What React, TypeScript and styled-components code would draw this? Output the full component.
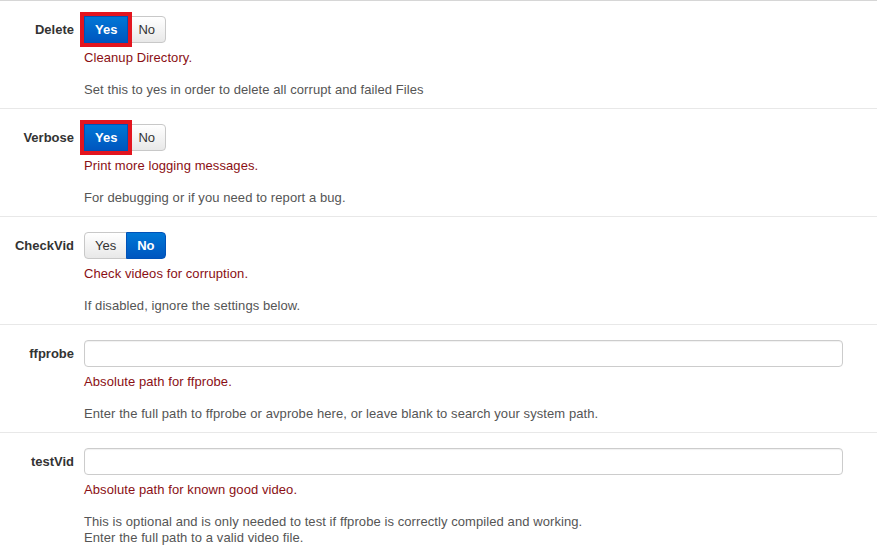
import React from "react";
import styled, { createGlobalStyle } from "styled-components";

const Global = createGlobalStyle`
  html, body { margin: 0; padding: 0; background: #fff; }
  body { font-family: "Liberation Sans", Arial, Helvetica, sans-serif; font-size: 13px; color: #333; letter-spacing: 0.08px; }
`;

const Page = styled.div`
  width: 877px;
  border-top: 1px solid #d6d6d6;
`;

const Row = styled.div<{ $first?: boolean }>`
  display: grid;
  grid-template-columns: 74px 759px;
  column-gap: 10px;
  padding: 15px 0 10px;
  border-top: ${(p) => (p.$first ? "none" : "1px solid #e8e8e8")};
`;

const Label = styled.label`
  font-weight: bold;
  text-align: right;
  line-height: 27px;
  height: 27px;
  white-space: nowrap;
  color: #333;
  letter-spacing: 0;
`;

const Controls = styled.div`
  display: flex;
  flex-direction: column;
`;

const Group = styled.div`
  display: flex;
  height: 27px;
`;

const Toggle = styled.button<{ $active?: boolean; $flag?: boolean; $pos: "left" | "right" }>`
  font-family: inherit;
  font-size: 13px;
  height: 27px;
  padding: 0 10px;
  margin: 0;
  cursor: pointer;
  line-height: 25px;
  letter-spacing: 0;
  border: 1px solid ${(p) => (p.$active ? "#0052b8" : "#c8c8c8")};
  border-radius: ${(p) => (p.$flag ? "0" : p.$pos === "left" ? "4px 0 0 4px" : "0 4px 4px 0")};
  ${(p) => (p.$pos === "right" ? "margin-left: -1px;" : "")}
  font-weight: ${(p) => (p.$active ? "bold" : "normal")};
  color: ${(p) => (p.$active ? "#fff" : "#333")};
  background: ${(p) =>
    p.$active
      ? "linear-gradient(to bottom, #0077d6, #0056bf)"
      : "linear-gradient(to bottom, #ffffff, #e8e8e8)"};
  ${(p) => (p.$flag ? "outline: 4px solid #e3151f; outline-offset: 0px; position: relative; z-index: 1;" : "")}
`;

const TextInput = styled.input`
  box-sizing: border-box;
  width: 759px;
  height: 27px;
  border: 1px solid #cccccc;
  border-radius: 4px;
  box-shadow: inset 0 1px 1px rgba(0, 0, 0, 0.06);
  padding: 0 8px;
  font-family: inherit;
  font-size: 13px;
  margin: 0;
`;

const Help = styled.div`
  margin-top: 7px;
  line-height: 16px;
  color: #8a0f14;
`;

const Desc = styled.div`
  margin-top: 16px;
  line-height: 16px;
  color: #555;
`;

type Item = {
  label: string;
  kind: "toggle" | "text";
  value?: boolean;
  flag?: boolean;
  help: string;
  desc: React.ReactNode;
};

const items: Item[] = [
  {
    label: "Delete",
    kind: "toggle",
    value: true,
    flag: true,
    help: "Cleanup Directory.",
    desc: "Set this to yes in order to delete all corrupt and failed Files",
  },
  {
    label: "Verbose",
    kind: "toggle",
    value: true,
    flag: true,
    help: "Print more logging messages.",
    desc: "For debugging or if you need to report a bug.",
  },
  {
    label: "CheckVid",
    kind: "toggle",
    value: false,
    help: "Check videos for corruption.",
    desc: "If disabled, ignore the settings below.",
  },
  {
    label: "ffprobe",
    kind: "text",
    help: "Absolute path for ffprobe.",
    desc: "Enter the full path to ffprobe or avprobe here, or leave blank to search your system path.",
  },
  {
    label: "testVid",
    kind: "text",
    help: "Absolute path for known good video.",
    desc: (
      <>
        This is optional and is only needed to test if ffprobe is correctly compiled and working.
        <br />
        Enter the full path to a valid video file.
      </>
    ),
  },
];

export default function App() {
  return (
    <>
      <Global />
      <Page>
        {items.map((it, i) => (
          <Row key={it.label} $first={i === 0}>
            <Label>{it.label}</Label>
            <Controls>
              {it.kind === "toggle" ? (
                <Group>
                  <Toggle $pos="left" $active={it.value} $flag={it.flag && it.value}>
                    Yes
                  </Toggle>
                  <Toggle $pos="right" $active={!it.value}>
                    No
                  </Toggle>
                </Group>
              ) : (
                <TextInput type="text" />
              )}
              <Help>{it.help}</Help>
              <Desc>{it.desc}</Desc>
            </Controls>
          </Row>
        ))}
      </Page>
    </>
  );
}
